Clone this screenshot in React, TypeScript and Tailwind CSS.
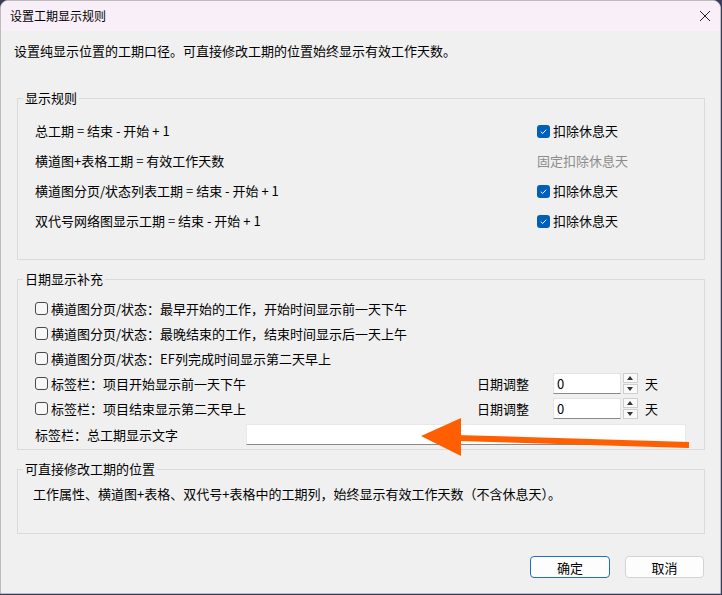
import React from "react";

const font = { fontFamily: '"Noto Sans CJK SC", "Noto Sans", sans-serif' };

function Check({ checked = false }: { checked?: boolean }) {
  if (checked) {
    return (
      <span className="flex h-[13px] w-[13px] shrink-0 items-center justify-center rounded-[3px] bg-[#005fb8]">
        <svg viewBox="0 0 10 10" className="h-[9px] w-[9px]">
          <path d="M2 5.2 L4.1 7.2 L8 3" fill="none" stroke="white" strokeWidth="1.1" />
        </svg>
      </span>
    );
  }
  return <span className="h-[13px] w-[13px] shrink-0 rounded-[3px] border border-[#4a4a4a] bg-[#f7f7f7]" />;
}

function Spinner() {
  return (
    <div className="ml-[2px] flex flex-col gap-[1px]">
      <span className="flex h-[10px] w-[15px] items-center justify-center border border-[#cfcfcf] bg-[#fafafa]">
        <svg viewBox="0 0 6 4" className="h-[4px] w-[6px]">
          <path d="M0 4 L3 0 L6 4 Z" fill="#333" />
        </svg>
      </span>
      <span className="flex h-[10px] w-[15px] items-center justify-center border border-[#cfcfcf] bg-[#fafafa]">
        <svg viewBox="0 0 6 4" className="h-[4px] w-[6px]">
          <path d="M0 0 L6 0 L3 4 Z" fill="#333" />
        </svg>
      </span>
    </div>
  );
}

function DateAdjust() {
  return (
    <div className="ml-auto mr-[46px] flex items-center">
      <span className="w-[76px]">日期调整</span>
      <div className="flex h-[21px] w-[68px] items-center border border-[#e3e3e3] border-b-[#8a8a8a] bg-white pl-[3px]">0</div>
      <Spinner />
      <span className="ml-[7px]">天</span>
    </div>
  );
}

function Rule({ label, right }: { label: string; right: React.ReactNode }) {
  return (
    <div className="flex h-[30px] items-center">
      <span className="w-[502px]">{label}</span>
      {right}
    </div>
  );
}

function Deduct() {
  return (
    <span className="flex items-center gap-[3px]">
      <Check checked />
      扣除休息天
    </span>
  );
}

function Option({ label, children }: { label: string; children?: React.ReactNode }) {
  return (
    <div className="flex h-[25px] items-center">
      <Check />
      <span className="ml-[3px]">{label}</span>
      {children}
    </div>
  );
}

export default function App() {
  return (
    <div className="h-[595px] w-[722px] overflow-hidden bg-[#3b3b5c]" style={font}>
      <div className="relative flex h-[594px] w-[721px] flex-col overflow-hidden rounded-t-[8px] border border-[#bdbdbd] bg-[#f0f0f0] text-[13px] text-black">
        <div className="flex h-[30px] shrink-0 items-center justify-between bg-[#f9eff8] pl-[9px] pr-[9px] text-[12px]">
          <span>设置工期显示规则</span>
          <svg viewBox="0 0 12 12" className="h-[12px] w-[12px]">
            <path d="M1 1 L11 11 M11 1 L1 11" stroke="#222" strokeWidth="1" />
          </svg>
        </div>

        <p className="ml-[13px] mt-[10px] leading-[20px]">设置纯显示位置的工期口径。可直接修改工期的位置始终显示有效工作天数。</p>

        <fieldset className="ml-[16px] mt-[28px] w-[688px] border border-[#dadada] pb-[23px] pl-[17px] pt-[9px]">
          <legend className="-ml-[12px] px-[2px] leading-[18px]">显示规则</legend>
          <Rule label="总工期 = 结束 - 开始 + 1" right={<Deduct />} />
          <Rule label="横道图+表格工期 = 有效工作天数" right={<span className="text-[#8c8c8c]">固定扣除休息天</span>} />
          <Rule label="横道图分页/状态列表工期 = 结束 - 开始 + 1" right={<Deduct />} />
          <Rule label="双代号网络图显示工期 = 结束 - 开始 + 1" right={<Deduct />} />
        </fieldset>

        <fieldset className="ml-[16px] mt-[10px] w-[688px] border border-[#dadada] pb-[2px] pl-[17px] pt-[8px]">
          <legend className="-ml-[12px] px-[2px] leading-[18px]">日期显示补充</legend>
          <Option label="横道图分页/状态：最早开始的工作，开始时间显示前一天下午" />
          <Option label="横道图分页/状态：最晚结束的工作，结束时间显示后一天上午" />
          <Option label="横道图分页/状态：EF列完成时间显示第二天早上" />
          <Option label="标签栏：项目开始显示前一天下午">
            <DateAdjust />
          </Option>
          <Option label="标签栏：项目结束显示第二天早上">
            <DateAdjust />
          </Option>
          <div className="mt-[1px] flex h-[25px] items-center">
            <span className="w-[211px]">标签栏：总工期显示文字</span>
            <div className="h-[21px] w-[440px] border border-[#e8e8e8] border-b-[#8a8a8a] bg-white" />
          </div>
        </fieldset>

        <fieldset className="ml-[16px] mt-[10px] w-[688px] border border-[#dadada] pb-[29px] pl-[15px] pt-[6px]">
          <legend className="-ml-[10px] px-[2px] leading-[18px]">可直接修改工期的位置</legend>
          <p className="leading-[20px]">工作属性、横道图+表格、双代号+表格中的工期列，始终显示有效工作天数（不含休息天）。</p>
        </fieldset>

        <div className="mr-[16px] mt-[22px] flex justify-end gap-[15px]">
          <button type="button" className="h-[22px] w-[80px] rounded-[4px] border border-[#1f6fbf] bg-[#fdfdfd] text-[13px] leading-none">
            确定
          </button>
          <button type="button" className="h-[22px] w-[79px] rounded-[4px] border border-[#d3d3d3] bg-[#fdfdfd] text-[13px] leading-none">
            取消
          </button>
        </div>

        <svg className="pointer-events-none absolute left-0 top-0" width="722" height="595" viewBox="0 0 722 595">
          <path d="M688 444 L455 437" stroke="#ff5f00" strokeWidth="6" fill="none" />
          <path d="M420 435 L460 417 L460 455 Z" fill="#ff5f00" />
        </svg>
      </div>
    </div>
  );
}
